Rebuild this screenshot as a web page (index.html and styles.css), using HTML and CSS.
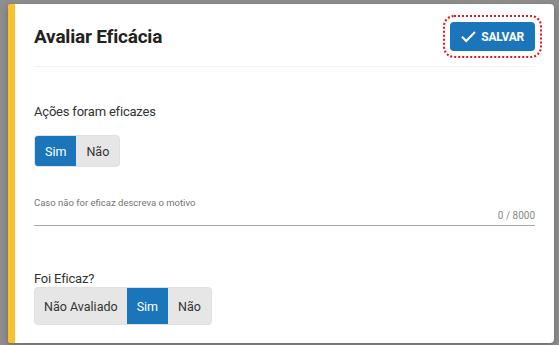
FILE: index.html
```html
<!DOCTYPE html>
<html lang="pt-BR">
<head>
  <meta charset="UTF-8">
  <meta name="viewport" content="width=device-width, initial-scale=1.0">
  <title>Avaliar Eficácia</title>
  <link rel="stylesheet" href="styles.css">
</head>
<body>

  <!-- modal de avaliação -->
  <div class="modal">
    <div class="modal-header">
      <h1>Avaliar Eficácia</h1>
      <button type="button" class="btn-save">
        <svg width="15" height="13" viewBox="0 0 15 13"><path d="M1 6.8 L5.2 11 L14 2" fill="none" stroke="#fff" stroke-width="2"/></svg>
        SALVAR
      </button>
    </div>

    <div class="modal-body">
      <div class="question">Ações foram eficazes</div>
      <div class="toggle">
        <button type="button" class="active">Sim</button>
        <button type="button">Não</button>
      </div>

      <div class="field">
        <label for="motivo">Caso não for eficaz descreva o motivo</label>
        <div class="field-row">
          <input type="text" id="motivo">
          <span class="counter">0 / 8000</span>
        </div>
      </div>

      <div class="question tight">Foi Eficaz?</div>
      <div class="toggle large">
        <button type="button" class="wide">Não Avaliado</button>
        <button type="button" class="active">Sim</button>
        <button type="button">Não</button>
      </div>
    </div>
  </div>

</body>
</html>
```

FILE: styles.css
```css
body {
  font-family: Roboto, 'Liberation Sans', sans-serif;
  margin: 0;
  padding: 4px 5px 2px 8px;
  background-color: #8e8e8e;
  color: #333;
  box-sizing: border-box;
  height: 345px;
}

.modal {
  height: 339px;
  box-sizing: border-box;
  background-color: #fff;
  border-left: 7px solid #fbc02d;
  border-radius: 2px 4px 4px 2px;
  padding: 0 19px;
  box-shadow: 0 2px 6px rgba(0, 0, 0, 0.25);
}

.modal-header {
  display: flex;
  justify-content: space-between;
  align-items: center;
  padding: 18px 0 15px;
  border-bottom: 1px solid #f2f2f2;
}

h1 {
  margin: 0;
  font-size: 19px;
  letter-spacing: -0.2px;
  font-weight: 700;
  color: #222;
}

.btn-save {
  display: flex;
  align-items: center;
  gap: 5px;
  height: 29px;
  padding: 0 11px 0 11px;
  border: none;
  border-radius: 4px;
  background-color: #1b75bb;
  color: #fff;
  font-family: inherit;
  font-size: 12px;
  letter-spacing: -0.2px;
  font-weight: 700;
  outline: 2px dotted #e8141b;
  outline-offset: 5px;
  cursor: pointer;
}

.modal-body {
  padding-top: 35px;
}

.question {
  font-size: 13px;
  letter-spacing: -0.2px;
  line-height: 20px;
  margin-bottom: 13px;
}

.question.tight {
  line-height: 16px;
  margin-bottom: 0;
}

.toggle {
  display: inline-flex;
  background-color: #e6e6e6;
  border: 1px solid #e0e0e0;
  border-radius: 4px;
  overflow: hidden;
  height: 32px;
  box-sizing: border-box;
}

.toggle button {
  border: none;
  background: transparent;
  font-family: inherit;
  font-size: 12.5px;
  color: #333;
  padding: 0 10px;
  cursor: pointer;
}

.toggle button.wide {
  padding: 0 9px;
}

.toggle button.active {
  background-color: #1b75bb;
  color: #fff;
}

.toggle.large {
  height: 38px;
}

.field {
  margin-top: 30px;
  margin-bottom: 45px;
}

.field label {
  display: block;
  font-size: 9.5px;
  line-height: 12px;
  color: #757575;
}

.field-row {
  display: flex;
  align-items: center;
  border-bottom: 1px solid #a8a8a8;
  height: 17px;
  padding-bottom: 2px;
  box-sizing: border-box;
}

.field-row input {
  flex: 1;
  border: none;
  outline: none;
  padding: 0;
  height: 12px;
  background: transparent;
}

.counter {
  font-size: 10px;
  line-height: 12px;
  color: #8a8a8a;
}
```
